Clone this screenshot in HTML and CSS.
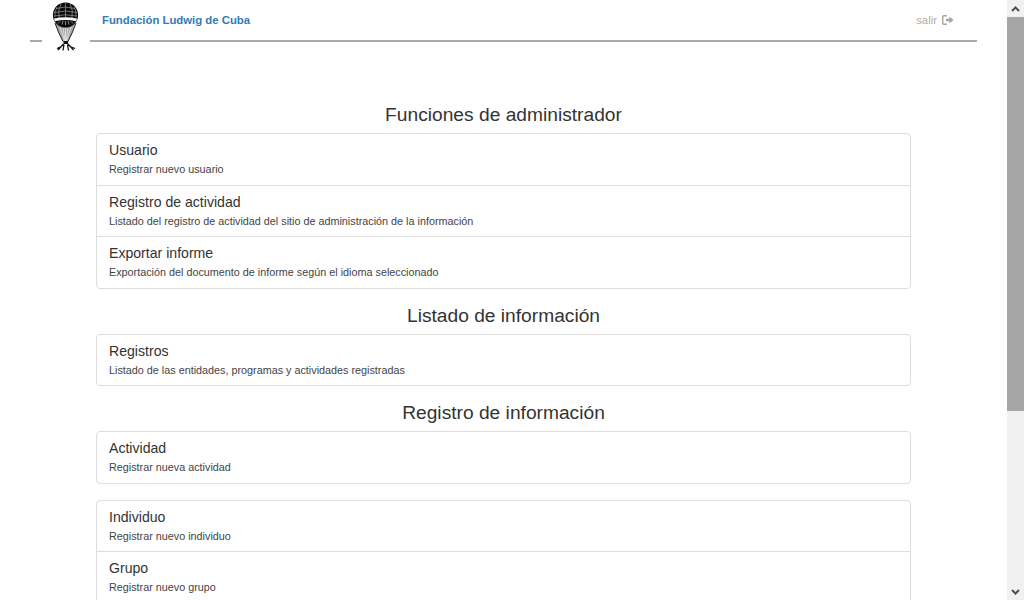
FILE: index.html
```html
<!DOCTYPE html>
<html lang="es">
<head>
<meta charset="utf-8">
<title>Fundación Ludwig de Cuba</title>
<link rel="stylesheet" href="styles.css">
</head>
<body>
<div class="viewport">
  <header class="topbar">
    <span class="rule rule-short"></span>
    <svg class="logo" width="30" height="54" viewBox="0 0 30 54">
      <path d="M4 23Q7 32 12 41.500H17Q22 32 25 23Z" fill="#a8a8a8"/>
      <path d="M4 23Q7 32 12 41.500M25 23Q22 32 17 41.500" stroke="#222" stroke-width="1" fill="none"/>
      <path d="M9 27L13.500 41M12 27L14 41M14.500 27V41M17 27L15 41M20 27L15.500 41" stroke="#eee" stroke-width=".7" fill="none"/>
      <circle cx="14.500" cy="15" r="12.600" fill="#0c0c0c"/>
      <g fill="none" stroke="#999" stroke-width=".7">
        <path d="M14.500 3V18M10 4Q6.500 10 8 18M19 4Q22.500 10 21 18M6 7Q3 12 4 17M23 7Q26 12 25 17"/>
        <path d="M5 8.500Q14.500 5.500 24 8.500M3 12.500Q14.500 9.500 26 12.500M3 16Q14.500 13.500 26 16"/>
      </g>
      <path d="M2.800 18.500Q14.500 16 26.200 18.500L25 21.200Q14.500 19 4 21.200Z" fill="#f5f5f5"/>
      <path d="M7 23.500L9 21.500M11 24.500L12 21M14.500 25V21M18 24.500L17 21M22 23.500L20 21.500" stroke="#aaa" stroke-width=".8" fill="none"/>
      <rect x="12.500" y="41" width="4.500" height="3" fill="#111"/>
      <path d="M12.500 44L7 50M17 44L22.500 50M13 44.500L12 50.500M16.500 44.500L17.500 50.500M6 48.500L10.500 46.500M19 46.500L24 48.500" stroke="#111" stroke-width="1.300" fill="none"/>
    </svg>
    <a class="brand" href="#">Fundación Ludwig de Cuba</a>
    <a class="logout" href="#">salir
      <svg width="12" height="10" viewBox="0 0 12 10"><path d="M5 .7H2Q.7.700.7 2V8Q.7 9.300 2 9.300H5" fill="none" stroke="#a9a39c" stroke-width="1.400"/><path d="M4 3.700H7.500V1.500L11.500 5L7.500 8.500V6.300H4Z" fill="#a9a39c"/></svg>
    </a>
  </header>
  <main class="content">
    <h2 class="section-title first">Funciones de administrador</h2>
    <div class="list">
      <a class="item"><h4>Usuario</h4><p>Registrar nuevo usuario</p></a>
      <a class="item"><h4>Registro de actividad</h4><p>Listado del registro de actividad del sitio de administración de la información</p></a>
      <a class="item"><h4>Exportar informe</h4><p>Exportación del documento de informe según el idioma seleccionado</p></a>
    </div>
    <h2 class="section-title">Listado de información</h2>
    <div class="list">
      <a class="item"><h4>Registros</h4><p>Listado de las entidades, programas y actividades registradas</p></a>
    </div>
    <h2 class="section-title">Registro de información</h2>
    <div class="list">
      <a class="item"><h4>Actividad</h4><p>Registrar nueva actividad</p></a>
    </div>
    <div class="list">
      <a class="item"><h4>Individuo</h4><p>Registrar nuevo individuo</p></a>
      <a class="item"><h4>Grupo</h4><p>Registrar nuevo grupo</p></a>
    </div>
  </main>
</div>
<aside class="scrollbar">
  <span class="arrow"><svg width="9" height="6" viewBox="0 0 9 6"><path d="M1 5L4.500 1.500L8 5" fill="none" stroke="#505050" stroke-width="2"/></svg></span>
  <span class="thumb"></span>
  <span class="track"></span>
  <span class="arrow"><svg width="9" height="6" viewBox="0 0 9 6"><path d="M1 1L4.500 4.500L8 1" fill="none" stroke="#505050" stroke-width="2"/></svg></span>
</aside>
</body>
</html>
```
FILE: styles.css
```css
* { box-sizing: border-box; }
html, body { margin: 0; height: 600px; overflow: hidden; }
body {
  display: flex;
  background: #fff;
  color: #333;
  font-family: "Liberation Sans", Arial, sans-serif;
}
.viewport { flex: 1; min-width: 0; height: 600px; overflow: hidden; }
.topbar {
  height: 54px;
  margin: 0 30px;
  display: flex;
  align-items: flex-start;
  font-size: 11.350px;
}
.rule { height: 2px; margin-top: 40px; background: #aaa; }
.rule-short { width: 12px; }
.logo { margin: 0 9px; width: 30px; flex: none; }
.brand {
  flex: 1;
  height: 42px;
  padding: 13px 0 0 12px;
  border-bottom: 2px solid #aaa;
  color: #337ab7;
  font-weight: bold;
  text-decoration: none;
  line-height: 14px;
}
.logout {
  height: 42px;
  padding: 13px 23px 0 0;
  border-bottom: 2px solid #aaa;
  color: #b3aea8;
  text-decoration: none;
  line-height: 14px;
  display: flex;
  gap: 5px;
  align-items: flex-start;
}
.logout svg { margin-top: 2px; }
.content { width: 815px; margin: 0 auto; }
.section-title {
  margin: 0;
  height: 45.200px;
  padding-top: 17px;
  font-size: 19.200px;
  line-height: 20px;
  font-weight: 400;
  text-align: center;
}
.section-title.first { height: 79.400px; padding-top: 51px; }
.list + .list { margin-top: 16.200px; }
.item {
  display: block;
  height: 52.400px;
  margin-bottom: -1px;
  padding: 7px 12px 0;
  border: 1px solid #ddd;
}
.item:first-child { border-radius: 4px 4px 0 0; }
.item:last-child { margin-bottom: 0; border-radius: 0 0 4px 4px; }
.item:only-child { border-radius: 4px; }
h4 { margin: 0; font-size: 14.100px; line-height: 18px; font-weight: 400; }
.item p { margin: 3px 0 0; font-size: 10.800px; line-height: 14px; color: #444; }
.scrollbar {
  width: 17px;
  flex: none;
  height: 600px;
  background: #f0f0f0;
  display: flex;
  flex-direction: column;
}
.arrow { height: 17px; display: flex; align-items: center; justify-content: center; flex: none; }
.thumb { height: 394px; background: #a6a6a6; flex: none; }
.track { flex: 1; }
```
